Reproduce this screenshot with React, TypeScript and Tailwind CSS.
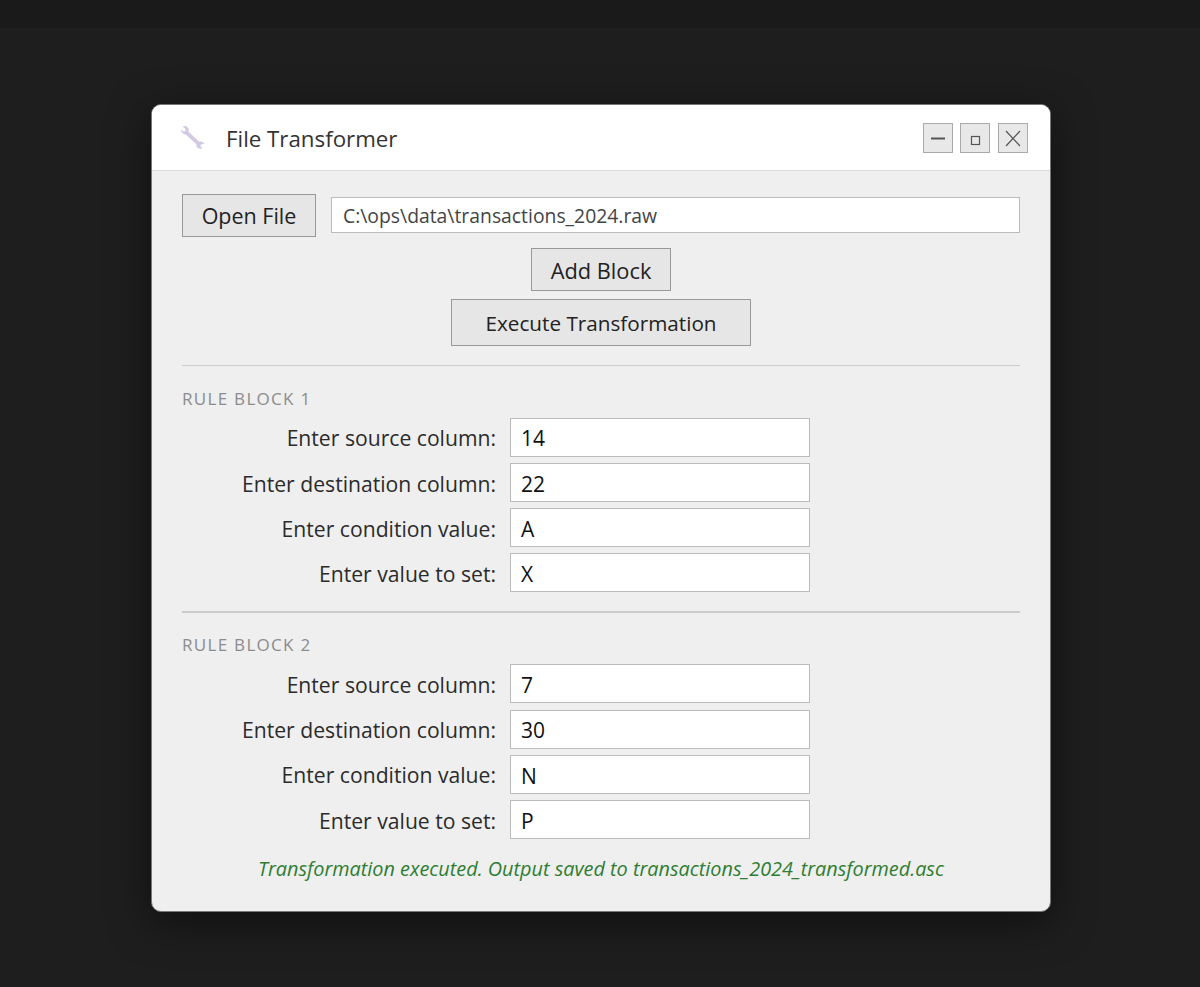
const font = "font-['Open_Sans','Noto_Sans',sans-serif]";

function Rule({ n, values, second }: { n: number; values: string[]; second?: boolean }) {
  const labels = ["Enter source column:", "Enter destination column:", "Enter condition value:", "Enter value to set:"];
  const nudgedLabel = second ? [true, false, false, true] : [false, true, true, true];
  const nudgedValue = second ? [true, false, true, true] : [false, true, true, true];
  return (
    <div>
      <div className="text-[17px] leading-[24px] text-[#8c8c8c] tracking-[1.3px]">RULE BLOCK {n}</div>
      <div className="mt-[7px] flex flex-col">
        {labels.map((l, i) => (
          <div key={l} className={i === 0 ? "flex items-center" : second && i === 1 ? "flex items-center mt-[7px]" : "flex items-center mt-[6px]"}>
            <div className={nudgedLabel[i] ? "w-[314px] pt-[2px] text-right text-[21.15px] leading-[28px] text-[#2b2b2b]" : "w-[314px] text-right text-[21.15px] leading-[28px] text-[#2b2b2b]"}>{l}</div>
            <div className={nudgedValue[i] ? "ml-[14px] w-[300px] h-[39px] bg-white border border-[#bbb] px-[10px] text-[21px] leading-[41px] text-[#111]" : "ml-[14px] w-[300px] h-[39px] bg-white border border-[#bbb] px-[10px] text-[21px] leading-[39px] text-[#111]"}>{values[i]}</div>
          </div>
        ))}
      </div>
    </div>
  );
}

function Ctl({ children, sw }: { children: React.ReactNode; sw?: number }) {
  return (
    <div className="w-[30px] h-[30px] border border-[#aaa] bg-[#e8e8e8]">
      <svg width="28" height="28" viewBox="0 0 28 28" fill="none" stroke="#555" strokeWidth={sw ?? 1.2}>{children}</svg>
    </div>
  );
}

export default function App() {
  return (
    <div className={`w-[1200px] h-[987px] bg-[#1e1e1e] flex flex-col ${font}`}>
      <div className="h-[28px] bg-[#1a1a1a] shrink-0" />
      <div className="flex-1 flex justify-center pt-[76px] pl-[2px]">
        <div className="w-[900px] h-[808px] rounded-[10px] overflow-hidden bg-[#efefef] border border-[#777] shadow-[0_10px_40px_rgba(0,0,0,0.5)] flex flex-col">
          <div className="h-[66px] shrink-0 bg-white border-b border-[#ddd] flex items-center pl-[27px] pr-[22px]">
            <svg width="27" height="27" viewBox="0 0 26 26" fill="#d2c9e2" className="shrink-0 blur-[0.4px]">
              <path d="M3 2.5 L7 2 L9.5 4.5 L9.2 7.5 L19.5 17 C21.5 16.4 23.6 17.2 24.5 19.2 L21.6 19.4 L20.5 21 L22.5 23.5 C20 24.6 17.6 23.4 16.8 21.2 L16.7 19.4 L6.5 10 C4 10 2 8 2 5.4 L4.8 7.4 L6.5 6.4 L5.6 4 Z" />
            </svg>
            <span className="ml-[20px] text-[22.3px] leading-[32px] pt-[3px] text-[#333]">File Transformer</span>
            <div className="ml-auto flex">
              <Ctl sw={1.8}><path d="M7 14.5 H21" /></Ctl>
              <div className="w-[7px]" />
              <Ctl><rect x="10.5" y="12.5" width="8" height="8" /></Ctl>
              <div className="w-[8px]" />
              <Ctl><path d="M7 7 L21 22 M21 7 L7 22" /></Ctl>
            </div>
          </div>
          <div className="flex-1 px-[30px] pt-[23px]">
            <div className="flex gap-[15px]">
              <div className="w-[134px] h-[43px] bg-[#e6e6e6] border border-[#999] pt-[2px] flex items-center justify-center text-[21.5px] text-[#222]">Open File</div>
              <div className="flex-1 h-[36px] mt-[3px] bg-white border border-[#bbb] px-[11px] text-[19.35px] leading-[36px] text-[#444]">C:\ops\data\transactions_2024.raw</div>
            </div>
            <div className="flex justify-center mt-[11px]">
              <div className="w-[140px] h-[43px] bg-[#e6e6e6] border border-[#999] pt-[3px] flex items-center justify-center text-[21.8px] text-[#222]">Add Block</div>
            </div>
            <div className="flex justify-center mt-[8px]">
              <div className="w-[300px] h-[47px] bg-[#e6e6e6] border border-[#999] pt-[2px] flex items-center justify-center text-[20.7px] text-[#222]">Execute Transformation</div>
            </div>
            <div className="mt-[19px] border-t border-[#ccc]" />
            <div className="mt-[21px]"><Rule n={1} values={["14", "22", "A", "X"]} /></div>
            <div className="mt-[19px] border-t-2 border-[#ccc]" />
            <div className="mt-[20px]"><Rule n={2} values={["7", "30", "N", "P"]} second /></div>
            <div className="mt-[15px] text-center italic text-[19.85px] text-[#2e7d32]">Transformation executed. Output saved to transactions_2024_transformed.asc</div>
          </div>
        </div>
      </div>
    </div>
  );
}
